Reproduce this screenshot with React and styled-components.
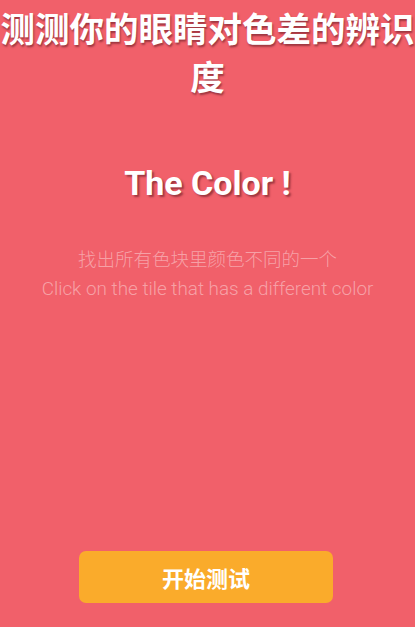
import React from 'react';
import styled, { createGlobalStyle } from 'styled-components';

const GlobalStyle = createGlobalStyle`
  html, body {
    margin: 0;
    padding: 0;
    height: 100%;
  }
  body {
    background: #f1606a;
    font-family: Roboto, "Noto Sans CJK SC", sans-serif;
  }
`;

const Screen = styled.div`
  min-height: 100vh;
  box-sizing: border-box;
  display: flex;
  flex-direction: column;
  align-items: center;
  padding: 6px 0 24px;
  background: #f1606a;
`;

const Headline = styled.h1`
  margin: 0;
  width: 100%;
  text-align: center;
  font-size: 34.5px;
  line-height: 48px;
  font-weight: 700;
  color: #fff;
  text-shadow: 1px 2px 2px rgba(90, 20, 30, 0.55);
`;

const Brand = styled.h2`
  margin: 61px 0 0;
  font-size: 34px;
  line-height: 40px;
  font-weight: 700;
  color: #fff;
  text-shadow: 2px 2px 2px rgba(90, 20, 30, 0.55);
`;

const Hint = styled.p`
  margin: ${(p) => (p.first ? '44px' : '3px')} 0 0;
  font-size: ${(p) => (p.first ? '18.5px' : '18.9px')};
  line-height: 26px;
  font-weight: 300;
  color: rgba(255, 255, 255, 0.42);
  text-align: center;
  white-space: nowrap;
`;

const StartButton = styled.button`
  margin-top: auto;
  margin-right: 3px;
  width: 254px;
  height: 52px;
  border: none;
  border-radius: 7px;
  background: #faab2b;
  color: #fff;
  font-family: "Noto Sans CJK SC", sans-serif;
  font-size: 22px;
  font-weight: 700;
  cursor: pointer;
`;

export default function App() {
  return (
    <>
      <GlobalStyle />
      <Screen>
        <Headline>测测你的眼睛对色差的辨识度</Headline>
        <Brand>The Color !</Brand>
        <Hint first>找出所有色块里颜色不同的一个</Hint>
        <Hint>Click on the tile that has a different color</Hint>
        <StartButton>开始测试</StartButton>
      </Screen>
    </>
  );
}
